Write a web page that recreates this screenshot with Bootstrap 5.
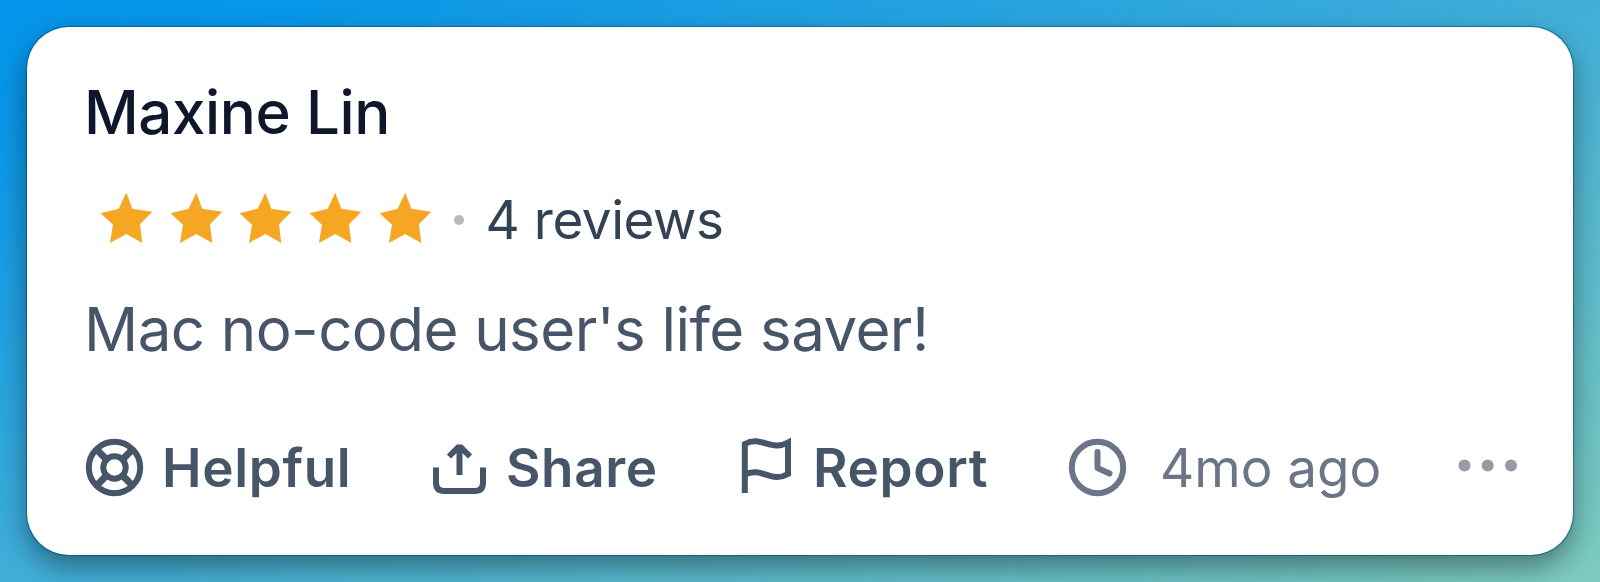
<!DOCTYPE html>
<html lang="en">
<head>
  <meta charset="UTF-8" />
  <meta name="viewport" content="width=device-width, initial-scale=1.0" />
  <title>Maxine Lin - Review</title>
  <link href="https://cdn.jsdelivr.net/npm/bootstrap@5.3.3/dist/css/bootstrap.min.css" rel="stylesheet" />
  <style>
    body {
      height: 582px;
      padding: 27px;
      overflow: hidden;
      font-family: Inter, "Liberation Sans", sans-serif;
      background: linear-gradient(to bottom right, #0494ea 0%, #0896e8 10%, #40aed8 50%, #7ecbbe 100%);
    }
    .review-card {
      height: 528px;
      padding: 49px 52px 0 57px;
      border-radius: 42px;
      box-shadow: 0 0 1px .5px rgba(0, 80, 120, .6), 0 12px 28px rgba(0, 0, 0, .4);
    }
    .reviewer {
      font-size: 60px;
      line-height: 72px;
      font-weight: 500;
      letter-spacing: -.4px;
      color: #0f172a;
    }
    .rating { margin-top: 39px; height: 64px; padding-left: 16px; }
    .stars { gap: 16.4px; padding-bottom: 3px; }
    .stars svg { width: 53.3px; height: 52px; fill: #f5a623; }
    .dot { width: 10px; height: 10px; background: #b4bac1; margin: 1px 22px 0 21.5px; }
    .reviews {
      padding-top: 1px;
      font-size: 53px;
      line-height: 64px;
      letter-spacing: -.45px;
      color: #334155;
    }
    .review-text {
      margin-top: 42px;
      font-size: 60px;
      line-height: 72px;
      letter-spacing: -.56px;
      color: #475569;
    }
    .actions {
      display: grid;
      grid-template-columns: 347px 307px 328px 1fr auto;
      margin-top: 71px;
      font-size: 53px;
      line-height: 64px;
      color: #475569;
    }
    .actions .fw-semibold { letter-spacing: .65px; }
    .actions svg { flex: none; fill: none; stroke: currentColor; stroke-width: 6; }
    .time { color: #6b7587; }
    .actions .more { fill: #959ca8; stroke: none; }
  </style>
</head>
<body>
  <div class="card review-card border-0 bg-white">
    <div class="reviewer text-nowrap">Maxine Lin</div>

    <div class="rating d-flex align-items-center text-nowrap">
      <div class="stars d-flex" id="stars"></div>
      <span class="dot rounded-circle"></span>
      <span class="reviews">4 reviews</span>
    </div>

    <div class="review-text text-nowrap">Mac no-code user's life saver!</div>

    <div class="actions text-nowrap">
      <div class="d-flex fw-semibold">
        <svg width="78" height="64">
          <circle cx="30.5" cy="31.5" r="25.7" />
          <circle cx="30.5" cy="31.5" r="11.2" />
          <path d="M12.3 13.3l10.5 10.5M48.7 13.3L38.2 23.8M12.3 49.7l10.5-10.5M48.7 49.7L38.2 39.2" stroke-width="7" />
        </svg>
        <span>Helpful</span>
      </div>
      <div class="d-flex fw-semibold">
        <svg width="75" height="64">
          <path d="M5 31.5v15q0 8.500 8.500 8.500h30q8.500 0 8.500-8.500V31.500M28.500 39V11M18 20.500L27 11.500H30L39 20.500" />
        </svg>
        <span>Share</span>
      </div>
      <div class="d-flex fw-semibold">
        <svg width="75" height="64">
          <path d="M6.800 57V8C23 -1 33 16 50 6.500V38C33 48 24 30 6.800 38.500" />
        </svg>
        <span>Report</span>
      </div>
      <div class="d-flex time">
        <svg width="94" height="64">
          <circle cx="31.500" cy="31.500" r="25.700" />
          <path d="M31.500 16v16l12 5.500" stroke-linecap="round" stroke-linejoin="round" />
        </svg>
        <span>4mo ago</span>
      </div>
      <svg class="more" width="66" height="64">
        <circle cx="9.500" cy="29.500" r="6" />
        <circle cx="32.700" cy="29.500" r="6" />
        <circle cx="56" cy="29.500" r="6" />
      </svg>
    </div>
  </div>

  <script src="https://cdn.jsdelivr.net/npm/bootstrap@5.3.3/dist/js/bootstrap.bundle.min.js"></script>
  <script>
    const stars = document.getElementById("stars");
    for (let i = 0; i < 5; i++) {
      stars.innerHTML += `<svg viewBox="0 0 160 156"><path d="M79 2L97 50L157 59L120 97L127 153L79 126L30 153L39 98L2 64L56 50Z"/></svg>`;
    }
  </script>
</body>
</html>
